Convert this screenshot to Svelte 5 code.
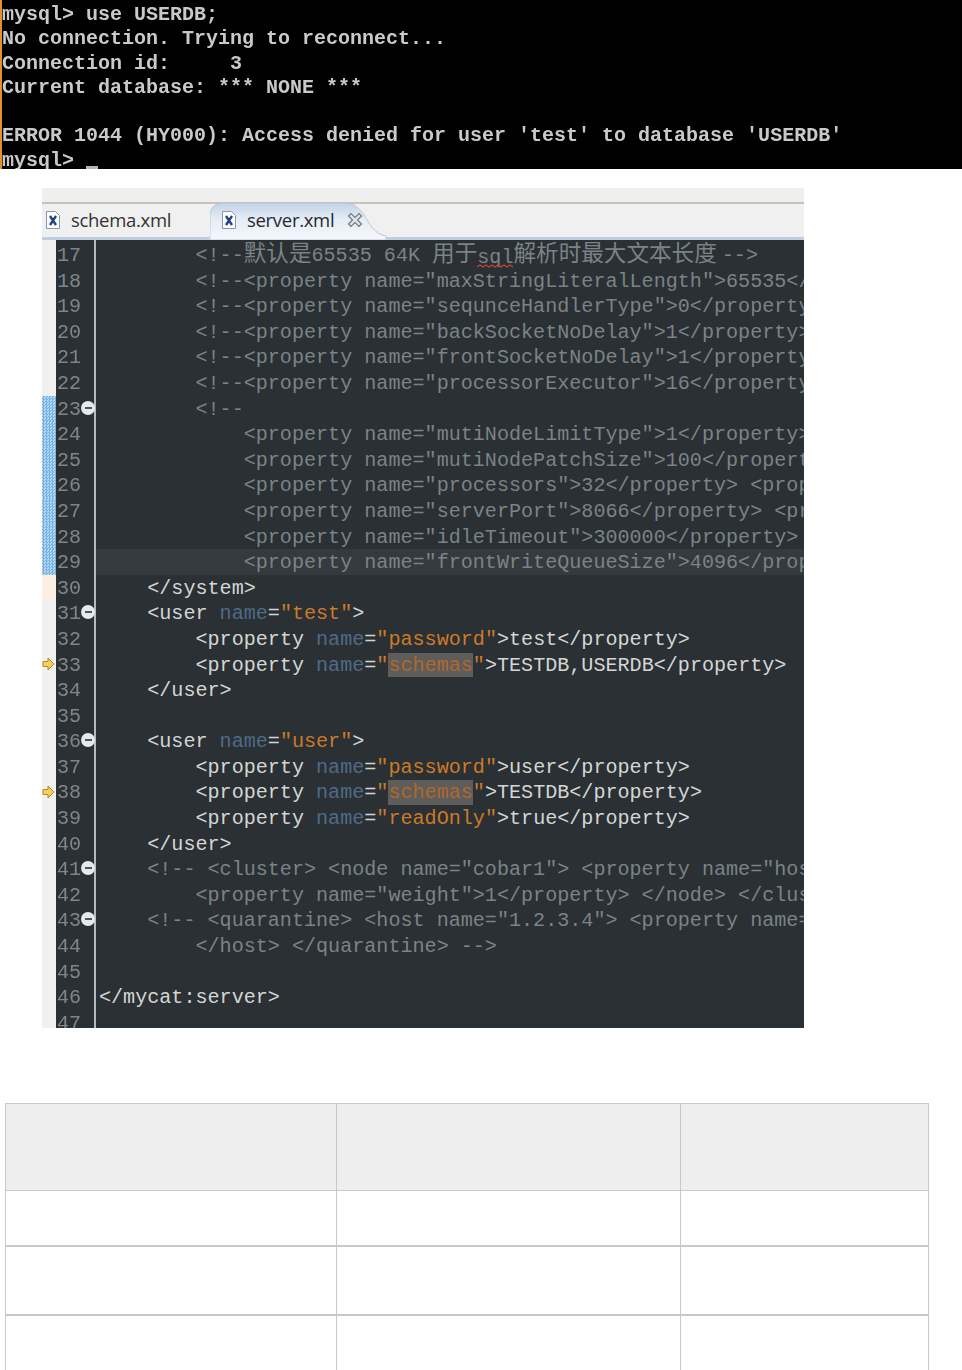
<script>
  const terminal = `mysql> use USERDB;
No connection. Trying to reconnect...
Connection id:     3
Current database: *** NONE ***

ERROR 1044 (HY000): Access denied for user 'test' to database 'USERDB'
mysql> `;

  // c = comment, t = tag, a = attribute, v = value, h = search hit
  const c = (s) => ['c', s];
  const t = (s) => ['t', s];
  const a = (s) => ['a', s];
  const v = (s) => ['v', s];
  const h = (s) => ['h', s];
  const prop = (name, val) => [t('<property '), a('name'), t('='), v(`"${name}"`), t(`>${val}</property>`)];

  const lines = [
    { n: 17, cjk: true },
    { n: 18, code: [c('        <!--<property name="maxStringLiteralLength">65535</property>-->')] },
    { n: 19, code: [c('        <!--<property name="sequnceHandlerType">0</property>-->')] },
    { n: 20, code: [c('        <!--<property name="backSocketNoDelay">1</property>-->')] },
    { n: 21, code: [c('        <!--<property name="frontSocketNoDelay">1</property>-->')] },
    { n: 22, code: [c('        <!--<property name="processorExecutor">16</property>-->')] },
    { n: 23, fold: true, mark: true, code: [c('        <!--')] },
    { n: 24, mark: true, code: [c('            <property name="mutiNodeLimitType">1</property>')] },
    { n: 25, mark: true, code: [c('            <property name="mutiNodePatchSize">100</property>')] },
    { n: 26, mark: true, code: [c('            <property name="processors">32</property> <property')] },
    { n: 27, mark: true, code: [c('            <property name="serverPort">8066</property> <property')] },
    { n: 28, mark: true, code: [c('            <property name="idleTimeout">300000</property>')] },
    { n: 29, mark: true, current: true, code: [c('            <property name="frontWriteQueueSize">4096</property>')] },
    { n: 30, peach: true, code: [t('    </system>')] },
    { n: 31, fold: true, code: [t('    <user '), a('name'), t('='), v('"test"'), t('>')] },
    { n: 32, code: [t('        '), ...prop('password', 'test')] },
    { n: 33, arrow: true, code: [t('        <property '), a('name'), t('='), v('"'), h('schemas'), v('"'), t('>TESTDB,USERDB</property>')] },
    { n: 34, code: [t('    </user>')] },
    { n: 35, code: [] },
    { n: 36, fold: true, code: [t('    <user '), a('name'), t('='), v('"user"'), t('>')] },
    { n: 37, code: [t('        '), ...prop('password', 'user')] },
    { n: 38, arrow: true, code: [t('        <property '), a('name'), t('='), v('"'), h('schemas'), v('"'), t('>TESTDB</property>')] },
    { n: 39, code: [t('        '), ...prop('readOnly', 'true')] },
    { n: 40, code: [t('    </user>')] },
    { n: 41, fold: true, code: [c('    <!-- <cluster> <node name="cobar1"> <property name="host">')] },
    { n: 42, code: [c('        <property name="weight">1</property> </node> </cluster> -->')] },
    { n: 43, fold: true, code: [c('    <!-- <quarantine> <host name="1.2.3.4"> <property name="user">')] },
    { n: 44, code: [c('        </host> </quarantine> -->')] },
    { n: 45, code: [] },
    { n: 46, code: [t('</mycat:server>')] },
    { n: 47, code: [] }
  ];
</script>

{#snippet xmlIcon()}
  <svg class="file-icon" width="16" height="20" viewBox="0 0 16 20">
    <path d="M1.5 1.5h9l4 4v13h-13z" fill="#fdfdfd" stroke="#8a97ad" />
    <path d="M5 6l6 9M11 6l-6 9" stroke="#24437f" stroke-width="2.4" fill="none" />
  </svg>
{/snippet}

<pre class="terminal">{terminal}<span class="cursor"></span></pre>

<div class="editor">
  <div class="tabbar">
    <div class="tabstrip">
      <div class="tab">
        {@render xmlIcon()}
        <span>schema.xml</span>
      </div>
      <div class="tab active">
        <svg class="tab-shape" width="176" height="38" viewBox="0 0 176 38" preserveAspectRatio="none">
          <defs>
            <linearGradient id="tabfill" x1="0" y1="0" x2="0" y2="1">
              <stop offset="0" stop-color="#c3d2e4" />
              <stop offset="0.45" stop-color="#e6edf5" />
              <stop offset="1" stop-color="#f6f8fb" />
            </linearGradient>
          </defs>
          <path d="M0 38V14C0 5 6 1 14 1H134C144 1 148 5 154 13C160 22 164 32 176 34V38Z" fill="url(#tabfill)" stroke="#b9c8da" />
        </svg>
        {@render xmlIcon()}
        <span>server.xml</span>
        <svg class="close" width="16" height="16" viewBox="0 0 16 16">
          <path d="M1.5 4l2.5-2.5 4 4 4-4L14.500 4l-4 4 4 4-2.500 2.500-4-4-4 4L1.500 12l4-4z" fill="#dfe4e9" stroke="#6f7b86" stroke-width="1.2" />
        </svg>
      </div>
    </div>
  </div>
  <div class="lines">
    {#each lines as line}
      <div class="row">
        <div class="ruler" class:mark={line.mark} class:peach={line.peach}>
          {#if line.arrow}
            <svg width="13" height="14" viewBox="0 0 13 14">
              <path d="M1 4.500h5V1l6 6-6 6V9.500H1z" fill="#f4cf5c" stroke="#b58a2a" />
            </svg>
          {/if}
        </div>
        <div class="num">
          {line.n}
          {#if line.fold}<span class="fold"></span>{/if}
        </div>
        <div class="code" class:current={line.current}>
          {#if line.cjk}
            <span class="c">{'        <!--'}<span class="zh">默认是</span>65535 64K <span class="zh">用于</span><span class="typo">sql<svg class="squiggle" width="36" height="4" viewBox="0 0 36 4"><path d="M0 3l3-2 3 2 3-2 3 2 3-2 3 2 3-2 3 2 3-2 3 2 3-2 3 2" fill="none" stroke="#c2482c" stroke-width="1.2" /></svg></span><span class="zh tail">解析时最大文本长度</span>{'-->'}</span>
          {:else}
            {#each line.code as [kind, text]}<span class={kind}>{text}</span>{/each}
          {/if}
        </div>
      </div>
    {/each}
  </div>
</div>

<table>
  <colgroup>
    <col class="col1" />
    <col class="col2" />
    <col class="col3" />
  </colgroup>
  <thead>
    <tr class="r0"><th></th><th></th><th></th></tr>
  </thead>
  <tbody>
    <tr class="r1"><td></td><td></td><td></td></tr>
    <tr class="r2"><td></td><td></td><td></td></tr>
    <tr class="r3"><td></td><td></td><td></td></tr>
  </tbody>
</table>

<style>
  :global(body) {
    background: #fff;
    height: 1370px;
    overflow: hidden;
  }

  .terminal {
    margin: 0;
    height: 169px;
    box-sizing: border-box;
    padding-top: 3px;
    overflow: hidden;
    background: #000;
    border-left: 2px solid #e2912f;
    color: #c9c9c9;
    font: bold 20px/24.3px "Liberation Mono", monospace;
    filter: blur(0.35px);
  }

  .cursor {
    display: inline-block;
    width: 12px;
    height: 4px;
    vertical-align: -4px;
    background: #b5b5b5;
  }

  .editor {
    margin: 19px 0 0 42px;
    width: 762px;
    height: 840px;
    overflow: hidden;
  }

  .tabbar {
    height: 52px;
    box-sizing: border-box;
    padding-top: 14px;
    background: #efefed;
  }

  .tabstrip {
    display: flex;
    height: 38px;
    box-sizing: border-box;
    border-top: 2px solid #c4c4b8;
    border-bottom: 3px solid #bfcde0;
    background: #f0f0f0;
    font: 18.5px "Open Sans", sans-serif;
    letter-spacing: -0.3px;
    color: #333;
  }

  .tab {
    display: flex;
    align-items: center;
    position: relative;
    height: 31px;
    padding-left: 3px;
    width: 165px;
    gap: 10px;
  }

  .tab.active {
    padding-left: 11px;
    width: 340px;
    color: #1f2a36;
  }

  .tab-shape {
    position: absolute;
    left: 0;
    top: -2px;
  }

  .file-icon,
  .tab span,
  .close {
    position: relative;
  }

  .close {
    margin-left: 3px;
  }

  .lines {
    height: 788px;
    box-sizing: border-box;
    padding-top: 2px;
    background: linear-gradient(to right, #f0f0f0 14px, #2a3033 14px, #2a3033 52px, #b4babd 52px, #b4babd 54px, #2a3033 54px);
    font: 20.1px/25.6px "Liberation Mono", monospace;
    white-space: pre;
    filter: blur(0.35px);
  }

  .row {
    display: flex;
    height: 25.6px;
  }

  .ruler {
    flex: 0 0 14px;
    display: flex;
    align-items: center;
  }

  .ruler.mark {
    background: repeating-conic-gradient(#79b3e2 0 25%, #b4d8f3 0 50%) 0 0 / 3px 3px;
  }

  .ruler.peach {
    background: #fbeee2;
  }

  .num {
    flex: 0 0 38px;
    box-sizing: border-box;
    padding: 1px 0 0 1px;
    position: relative;
    color: #7f8689;
  }

  .fold {
    position: absolute;
    right: -1px;
    top: 5px;
    width: 14px;
    height: 14px;
    border-radius: 50%;
    background: linear-gradient(#50565a, #50565a) center / 7px 2px no-repeat, #e6e9ec;
  }

  .code {
    flex: 1;
    margin-left: 2px;
    padding: 1px 0 0 3px;
    overflow: hidden;
  }

  .code.current {
    background: #343a3d;
  }

  .c {
    color: #7b8386;
  }

  .t {
    color: #d4d6d6;
  }

  .a {
    color: #4f6b88;
  }

  .v {
    color: #cc7a28;
  }

  .h {
    display: inline-block;
    background: #5d5d5c;
    color: #b0682a;
  }

  .zh {
    font-family: "Noto Sans CJK SC", sans-serif;
    font-size: 22.6px;
    line-height: 0;
  }

  .zh.tail {
    padding-right: 5px;
  }

  .typo {
    position: relative;
    line-height: 0;
    vertical-align: -2px;
  }

  .squiggle {
    position: absolute;
    left: 0;
    bottom: 1px;
  }

  table {
    margin: 75px 0 0 5px;
    width: 924px;
    table-layout: fixed;
    border-collapse: collapse;
  }

  .col1 {
    width: 331px;
  }

  .col2 {
    width: 344px;
  }

  th,
  td {
    border: 1px solid #c8c8c8;
    padding: 0;
  }

  th {
    background: #eee;
  }

  .r0 {
    height: 87px;
  }

  .r1 {
    height: 55px;
  }

  .r2 {
    height: 69px;
  }

  .r3 {
    height: 69px;
  }

  .r1 td,
  .r2 td {
    border-bottom-width: 2px;
  }
</style>
